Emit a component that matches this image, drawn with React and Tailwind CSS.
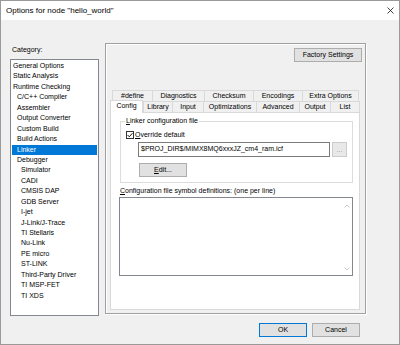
import React from 'react';

const items = [
  ['General Options', 0], ['Static Analysis', 0], ['Runtime Checking', 0],
  ['C/C++ Compiler', 1], ['Assembler', 1], ['Output Converter', 1], ['Custom Build', 1],
  ['Build Actions', 1], ['Linker', 1], ['Debugger', 1], ['Simulator', 2], ['CADI', 2],
  ['CMSIS DAP', 2], ['GDB Server', 2], ['I-jet', 2], ['J-Link/J-Trace', 2], ['TI Stellaris', 2],
  ['Nu-Link', 2], ['PE micro', 2], ['ST-LINK', 2], ['Third-Party Driver', 2], ['TI MSP-FET', 2], ['TI XDS', 2],
];
const indent = ['pl-[1px]', 'pl-[5px]', 'pl-[9px]'];

const row1 = [
  ['#define', 'w-[40px]'], ['Diagnostics', 'w-[52px]'], ['Checksum', 'w-[49px]'],
  ['Encodings', 'w-[49px]'], ['Extra Options', 'w-[57px] border-r'],
];
const row2 = [
  ['Library', 'w-[29px]'], ['Input', 'w-[31px]'], ['Optimizations', 'w-[53px]'],
  ['Advanced', 'w-[43px]'], ['Output', 'w-[31px]'], ['List', 'w-[30px] border-r'],
];

function Btn({ children, className = '' }) {
  return (
    <div className={'flex items-center justify-center bg-[#e1e1e1] border border-[#adadad] ' + className}>
      {children}
    </div>
  );
}

export default function App() {
  return (
    <div className="w-[400px] h-[345px] border border-[#9a9a9a] bg-[#f0f0f0] flex flex-col font-['Liberation_Sans',Arial,sans-serif] text-[7px] text-black overflow-hidden">
      {/* Title bar */}
      <div className="h-[19px] bg-white flex items-center justify-between pl-[5px] pr-[5px] shrink-0">
        <span className="text-[8px] leading-[10px]">Options for node "hello_world"</span>
        <svg width="7" height="7" viewBox="0 0 7 7">
          <path d="M0.5 0.5 L6.5 6.5 M6.5 0.5 L0.5 6.5" stroke="#111" strokeWidth="0.8" fill="none" />
        </svg>
      </div>

      {/* Main row */}
      <div className="flex items-start pl-[9px]">
        {/* Left column */}
        <div className="w-[89px] pt-[25px] flex flex-col">
          <div className="h-[10px] leading-[10px] pl-[2px]">Category:</div>
          <div className="mt-[4px] h-[257px] border border-[#828790] bg-white pt-[1px] px-[1px]">
            {items.map(([t, l]) => (
              <div
                key={t}
                className={
                  'h-[10.45px] leading-[10.45px] whitespace-nowrap ' +
                  indent[l] +
                  (t === 'Linker' ? ' bg-[#0078d7] text-white' : '')
                }
              >
                {t}
              </div>
            ))}
          </div>
        </div>

        {/* Right frame */}
        <div className="ml-[6px] mt-[23px] w-[261px] h-[271px] border border-[#a0a0a0] shadow-[inset_1px_1px_0_#ffffff,1px_1px_0_#ffffff] flex flex-col">
          <div className="flex justify-end pr-[3px] pt-[4px]">
            <Btn className="w-[68px] h-[14px]">Factory Settings</Btn>
          </div>

          {/* Tabs */}
          <div className="ml-[4px] mt-[28px] w-[250px] flex flex-col">
            <div className="flex pl-[2px] h-[11px]">
              {row1.map(([t, w]) => (
                <div key={t} className={'h-[11px] border-l border-t border-[#d9d9d9] flex items-center justify-center whitespace-nowrap ' + w}>
                  {t}
                </div>
              ))}
            </div>
            <div className="flex items-end h-[11px]">
              <div className="relative z-10 w-[33px] h-[13px] -mt-[2px] -mb-px bg-white border-l border-t border-r border-[#d9d9d9] flex items-center justify-center pb-[1px]">
                Config
              </div>
              {row2.map(([t, w]) => (
                <div key={t} className={'h-[11px] border-l border-t border-[#d9d9d9] flex items-center justify-center whitespace-nowrap ' + w}>
                  {t}
                </div>
              ))}
            </div>

            {/* Panel */}
            <div className="h-[198px] border border-[#d9d9d9] bg-white flex flex-col">
              <fieldset className="ml-[9px] mt-[3px] w-[233px] h-[67px] border border-[#dcdcdc] px-0 pb-0 pt-0 m-0 min-w-0">
                <legend className="ml-[4px] px-[1px] h-[10px] leading-[10px] whitespace-nowrap">
                  <span className="underline">L</span>inker configuration file
                </legend>
                <div className="flex items-center h-[9px] mt-[4px] pl-[5px]">
                  <div className="w-[8px] h-[8px] border border-[#333] bg-white flex items-center justify-center">
                    <svg width="6" height="6" viewBox="0 0 6 6">
                      <path d="M0.6 3 L2.3 4.8 L5.4 1.2" stroke="#000" strokeWidth="0.9" fill="none" />
                    </svg>
                  </div>
                  <span className="ml-[1px] leading-[9px]"><span className="underline">O</span>verride default</span>
                </div>
                <div className="flex mt-[3px] pl-[17px]">
                  <div className="w-[192px] h-[15px] border border-[#7a7a7a] bg-white flex items-center pl-[2px] whitespace-nowrap">
                    $PROJ_DIR$/MIMX8MQ6xxxJZ_cm4_ram.icf
                  </div>
                  <div className="ml-[2px] w-[15px] h-[15px] border border-[#cccccc] bg-[#e8e8e8] flex items-center justify-center text-[#9a9a9a] leading-[15px]">
                    ...
                  </div>
                </div>
                <div className="pl-[18px] mt-[6px]">
                  <Btn className="w-[48px] h-[14px]"><span><span className="underline">E</span>dit...</span></Btn>
                </div>
              </fieldset>

              <div className="ml-[9px] mt-[3px] h-[10px] leading-[10px] whitespace-nowrap">
                <span className="underline">C</span>onfiguration file symbol definitions: (one per line)
              </div>
              <div className="ml-[8px] mt-[1px] w-[234px] h-[79px] border border-[#828790] bg-white flex justify-end">
                <div className="w-[10px] h-full flex flex-col justify-between items-center pt-[6px] pb-[4px]">
                  <svg width="6" height="4" viewBox="0 0 6 4">
                    <path d="M0.5 3.5 L3 1 L5.5 3.5" stroke="#bdbdbd" strokeWidth="0.8" fill="none" />
                  </svg>
                  <svg width="6" height="4" viewBox="0 0 6 4">
                    <path d="M0.5 0.5 L3 3 L5.5 0.5" stroke="#bdbdbd" strokeWidth="0.8" fill="none" />
                  </svg>
                </div>
              </div>
            </div>
          </div>
        </div>
      </div>

      {/* Bottom buttons */}
      <div className="flex justify-end gap-[5px] pr-[39px] mt-[7px]">
        <Btn className="w-[48px] h-[14px] !border-[#0078d7]">OK</Btn>
        <Btn className="w-[48px] h-[14px]">Cancel</Btn>
      </div>
    </div>
  );
}
